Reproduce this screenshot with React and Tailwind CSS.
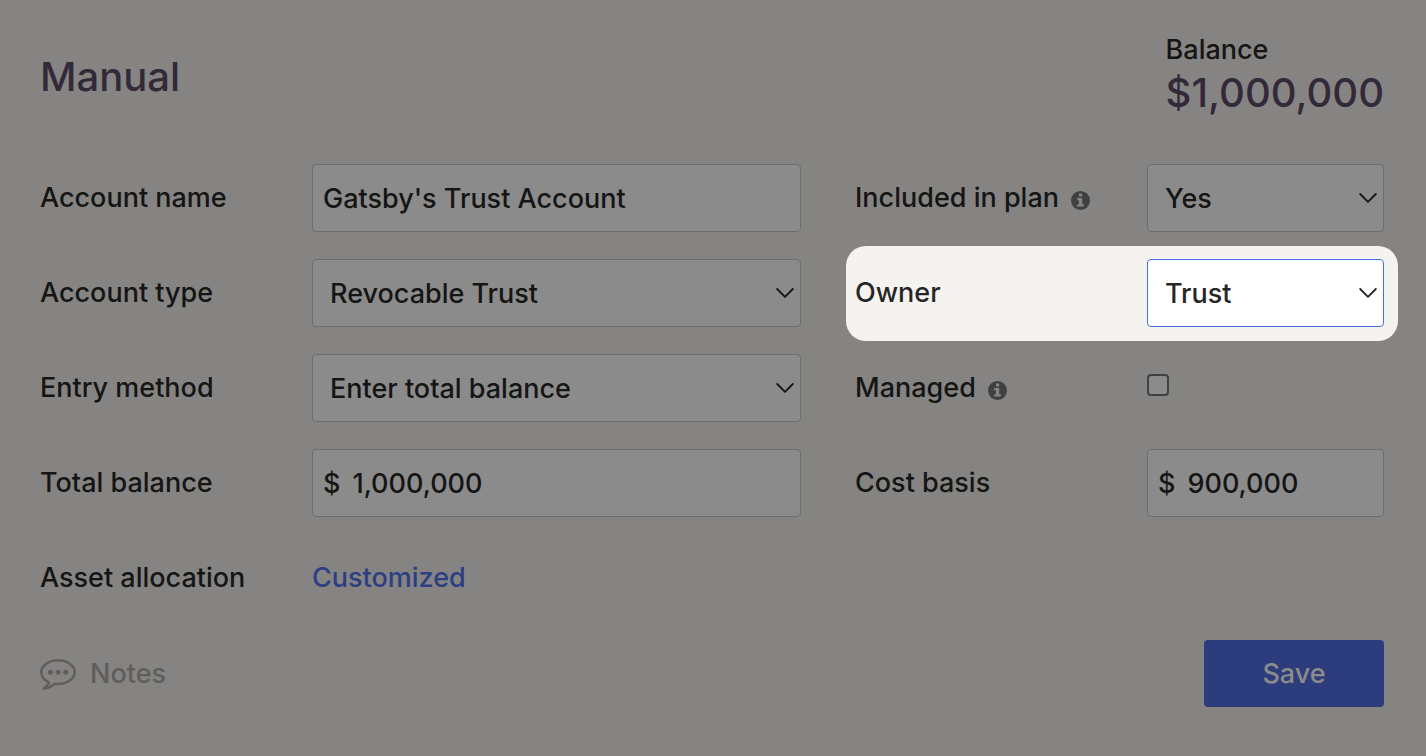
function Chevron() {
  return (
    <svg
      viewBox="0 0 18 10"
      fill="none"
      stroke="currentColor"
      strokeWidth="1.8"
      strokeLinecap="round"
      strokeLinejoin="round"
      className="pointer-events-none absolute right-[7px] top-1/2 h-2.5 w-[18px] -translate-y-1/2"
      aria-hidden="true"
    >
      <path d="M1.2 1 9 8.800 16.800 1" />
    </svg>
  );
}

function InfoIcon() {
  return (
    <svg viewBox="0 0 19 19" className="mt-1 size-[19px]" aria-hidden="true">
      <circle cx="9.500" cy="9.500" r="9.500" fill="#414040" />
      <path
        d="M8 2.600H11.200V5.400H8ZM6.200 6.900H11.200V13.200H12.800V15.600H6.200V13.200H7.900V9.300H6.200Z"
        fill="#868482"
      />
    </svg>
  );
}

function NotesIcon() {
  return (
    <svg viewBox="0 0 36 32" className="h-8 w-9" fill="none" aria-hidden="true">
      <path
        d="M18 2.300C8.900 2.300 1.300 7.600 1.300 14.200C1.300 18 3.700 21.400 7.500 23.500L9 24.300C8.500 26.700 6.600 28.800 3.600 30.600C8.500 30.200 12 28.300 14.800 25.700C15.900 25.900 16.900 26 18 26C27.100 26 34.700 20.700 34.700 14.200C34.700 7.600 27.100 2.300 18 2.300Z"
        stroke="currentColor"
        strokeWidth="2.500"
        strokeLinejoin="round"
      />
      <circle cx="10.300" cy="14.200" r="2.500" fill="currentColor" />
      <circle cx="18" cy="14.200" r="2.500" fill="currentColor" />
      <circle cx="25.700" cy="14.200" r="2.500" fill="currentColor" />
    </svg>
  );
}

function Row({ id, label, info, wide, highlighted, children }) {
  const Label = id ? "label" : "span";
  return (
    <div
      className={
        highlighted
          ? "-mt-[13px] -mr-3.5 -mb-3.5 -ml-[9px] flex items-center rounded-[20px] bg-[#f5f3f0] pt-[13px] pr-3.5 pb-3.5 pl-[9px] text-[#262626]"
          : "flex items-center"
      }
    >
      <Label
        htmlFor={id}
        className={
          wide
            ? "flex w-[272px] shrink-0 items-center gap-3"
            : "flex w-[292px] shrink-0 items-center gap-3"
        }
      >
        {label}
        {info && <InfoIcon />}
      </Label>
      <div className="flex h-[68px] min-w-0 flex-1 items-center">{children}</div>
    </div>
  );
}

function SelectField({ id, options, active }) {
  return (
    <div className="relative h-full w-full">
      <select
        id={id}
        className={
          active
            ? "h-full w-full appearance-none rounded border border-[#4a6ee0] bg-white pt-0.5 pr-8 pl-[17px] outline-none"
            : "h-full w-full appearance-none rounded border border-[#6d6d6d] bg-[#8b8b8b] pt-0.5 pr-8 pl-[17px] outline-none"
        }
      >
        {options.map((o) => (
          <option key={o}>{o}</option>
        ))}
      </select>
      <Chevron />
    </div>
  );
}

function MoneyField({ id, value }) {
  return (
    <div className="flex h-full w-full items-center gap-3 rounded border border-[#6d6d6d] bg-[#8b8b8b] px-2.5 pt-0.5">
      <span>$</span>
      <input id={id} defaultValue={value} className="w-full min-w-0 bg-transparent outline-none" />
    </div>
  );
}

export default function App() {
  return (
    <main className="min-h-screen bg-[#868482] pt-8 pr-[42px] pb-12 pl-10 font-['Inter',sans-serif] text-[27px] leading-9 font-[450] text-[#151514]">
      <header className="flex items-end justify-between">
        <h1 className="pb-4 text-[40px] leading-[50px] font-[450] text-[#322939]">Manual</h1>
        <div className="flex flex-col">
          <span>Balance</span>
          <span className="text-[40px] leading-[50px] text-[#322939]">$1,000,000</span>
        </div>
      </header>

      <form className="mt-[46px]" onSubmit={(e) => e.preventDefault()}>
        <div className="flex gap-[54px]">
          <div className="flex min-w-0 flex-1 flex-col gap-[27px]">
            <Row wide id="name" label="Account name">
              <input
                id="name"
                defaultValue="Gatsby's Trust Account"
                className="h-full w-full rounded border border-[#6d6d6d] bg-[#8b8b8b] px-2.5 outline-none"
              />
            </Row>
            <Row wide id="type" label="Account type">
              <SelectField id="type" options={["Revocable Trust", "Brokerage"]} />
            </Row>
            <Row wide id="method" label="Entry method">
              <SelectField id="method" options={["Enter total balance", "Enter holdings"]} />
            </Row>
            <Row wide id="total" label="Total balance">
              <MoneyField id="total" value="1,000,000" />
            </Row>
            <Row wide label="Asset allocation">
              <a href="#allocation" className="text-[#2d3e84]">
                Customized
              </a>
            </Row>
          </div>

          <div className="flex w-[529px] shrink-0 flex-col gap-[27px]">
            <Row id="included" label="Included in plan" info>
              <SelectField id="included" options={["Yes", "No"]} />
            </Row>
            <Row id="owner" label="Owner" highlighted>
              <SelectField id="owner" active options={["Trust", "Joint"]} />
            </Row>
            <Row id="managed" label="Managed" info>
              <input
                id="managed"
                type="checkbox"
                className="mb-1.5 size-[22px] appearance-none rounded border-2 border-[#414141] bg-[#8b8b8b]"
              />
            </Row>
            <Row id="cost" label="Cost basis">
              <MoneyField id="cost" value="900,000" />
            </Row>
          </div>
        </div>

        <footer className="mt-7 flex items-center justify-between">
          <button type="button" className="flex items-center gap-3.5 text-[#5f5e5d]">
            <NotesIcon />
            Notes
          </button>
          <button
            type="submit"
            className="h-[67px] w-[180px] rounded bg-[#2d3c7c] text-[#8b8b8b]"
          >
            Save
          </button>
        </footer>
      </form>
    </main>
  );
}
